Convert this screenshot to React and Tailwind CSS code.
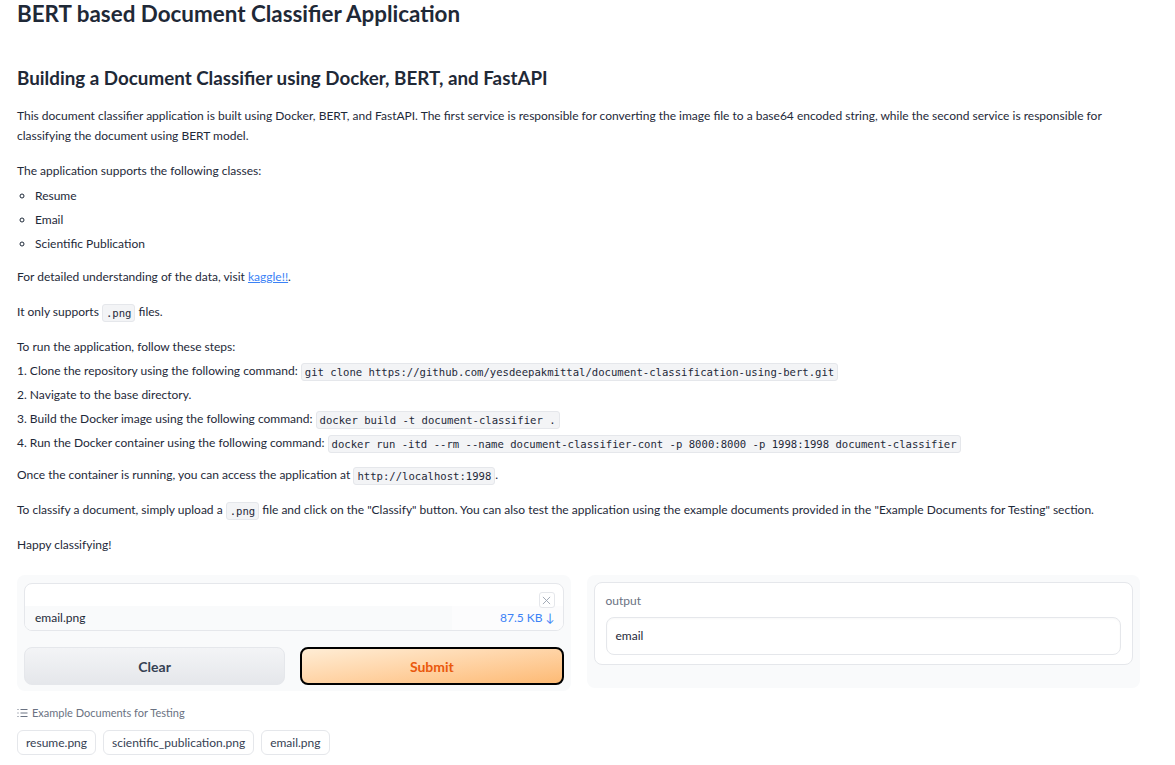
import { useState } from "react";

const sans = { fontFamily: "Lato, 'Noto Sans', sans-serif" };

function Code({ children }) {
  return (
    <code className="inline-block rounded-[3px] border border-[#e5e7eb] bg-[#f3f4f6] px-[3px] leading-[16px] text-[10.6px] text-gray-800 [font-family:'DejaVu_Sans_Mono',monospace] align-middle">
      {children}
    </code>
  );
}

export default function App() {
  const [result] = useState("email");
  const examples = ["resume.png", "scientific_publication.png", "email.png"];

  return (
    <div className="min-h-[765px] bg-white pl-[17px] pr-[35px] text-gray-800" style={sans}>
      <h1 className="text-[22.4px] font-bold leading-[28px] text-[#1f2937]">
        BERT based Document Classifier Application
      </h1>

      <h2 className="mt-[37px] text-[18.8px] font-bold leading-[26px] text-[#1f2937]">
        Building a Document Classifier using Docker, BERT, and FastAPI
      </h2>

      <div className="text-[12px] leading-[20px]">
        <p className="mt-[15px]">
          This document classifier application is built using Docker, BERT, and FastAPI. The first service is responsible for converting the image file to a base64 encoded string, while the second service is responsible for
          <br />
          classifying the document using BERT model.
        </p>

        <p className="mt-[15px]">The application supports the following classes:</p>
        <ul className="list-[circle] pl-[18px]">
          <li className="mt-[5px]">Resume</li>
          <li className="mt-1">Email</li>
          <li className="mt-1">Scientific Publication</li>
        </ul>

        <p className="mt-[13px]">
          For detailed understanding of the data, visit{" "}
          <a href="#" className="text-[#3b82f6] underline">kaggle!!</a>.
        </p>

        <p className="mt-[15px]">
          It only supports <Code>.png</Code> files.
        </p>

        <p className="mt-[15px]">To run the application, follow these steps:</p>
        <div className="mt-1">
          1. Clone the repository using the following command:{" "}
          <Code>git clone https://github.com/yesdeepakmittal/document-classification-using-bert.git</Code>
        </div>
        <div className="mt-1">2. Navigate to the base directory.</div>
        <div className="mt-1">
          3. Build the Docker image using the following command: <Code>docker build -t document-classifier .</Code>
        </div>
        <div className="mt-1">
          4. Run the Docker container using the following command:{" "}
          <Code>docker run -itd --rm --name document-classifier-cont -p 8000:8000 -p 1998:1998 document-classifier</Code>
        </div>

        <p className="mt-[12px]">
          Once the container is running, you can access the application at <Code>http://localhost:1998</Code>.
        </p>

        <p className="mt-[15px]">
          To classify a document, simply upload a <Code>.png</Code> file and click on the "Classify" button. You can also test the application using the example documents provided in the "Example Documents for Testing" section.
        </p>

        <p className="mt-[15px]">Happy classifying!</p>
      </div>

      <div className="mt-[20px] flex items-start gap-4">
        {/* input panel */}
        <div className="flex-1 rounded-lg bg-[#f9fafb] px-[7px] pb-[6px] pt-[8px]">
          <div className="relative overflow-hidden rounded-lg border border-[#e5e7eb] bg-white">
            <div className="h-[22px]" />
            <button className="absolute right-[8px] top-[8px] flex h-[16px] w-[16px] items-center justify-center rounded-[3px] border border-[#e5e7eb] bg-white text-gray-400">
              <svg width="9" height="9" viewBox="0 0 10 10" fill="none" stroke="currentColor" strokeWidth="1">
                <path d="M1 1l8 8M9 1l-8 8" />
              </svg>
            </button>
            <div className="flex h-[24px] items-center text-[12px]">
              <div className="flex h-full flex-1 items-center bg-[#f9fafb] pl-[10px]">email.png</div>
              <div className="flex h-full w-[111px] items-center justify-end bg-[#fcfcfd] pr-[8px] text-[#3b82f6]">
                87.5 KB <span className="ml-[3px]">↓</span>
              </div>
            </div>
          </div>
          <div className="mt-[16px] flex gap-[15px]">
            <button className="h-[38px] flex-1 rounded-lg border border-[#e5e7eb] bg-gradient-to-b from-[#f3f4f6] to-[#e5e7eb] text-[14px] font-bold text-gray-700">
              Clear
            </button>
            <button className="h-[38px] flex-1 rounded-lg border-2 border-black bg-gradient-to-br from-[#ffedd5] to-[#fdba74] text-[14px] font-bold text-[#ea580c]">
              Submit
            </button>
          </div>
        </div>

        {/* output panel */}
        <div className="flex-1 rounded-lg bg-[#f9fafb] px-[7px] pb-[23px] pt-[7px]">
          <div className="rounded-lg border border-[#e5e7eb] bg-white px-[11px] pb-[9px] pt-[10px]">
            <div className="text-[12px] leading-[16px] text-gray-500">output</div>
            <div className="mt-[8px] flex h-[38px] items-center rounded-lg border border-[#e5e7eb] px-[9px] text-[12px] shadow-[inset_0_1px_2px_rgba(0,0,0,0.03)]">
              {result}
            </div>
          </div>
        </div>
      </div>

      <div className="mt-[15px] flex items-center gap-[4px] text-[11px] leading-[14px] text-gray-500">
        <svg width="11" height="10" viewBox="0 0 11 10" fill="none" stroke="currentColor" strokeWidth="1">
          <path d="M0.5 1.5h1M0.5 5h1M0.5 8.5h1M3.5 1.5h7M3.5 5h7M3.5 8.5h7" />
        </svg>
        <span>Example Documents for Testing</span>
      </div>
      <div className="mt-[10px] flex gap-[7px]">
        {examples.map((name) => (
          <button
            key={name}
            className="h-[25px] rounded-md border border-[#e5e7eb] bg-white px-[8px] text-[12px] text-gray-700"
          >
            {name}
          </button>
        ))}
      </div>
    </div>
  );
}
